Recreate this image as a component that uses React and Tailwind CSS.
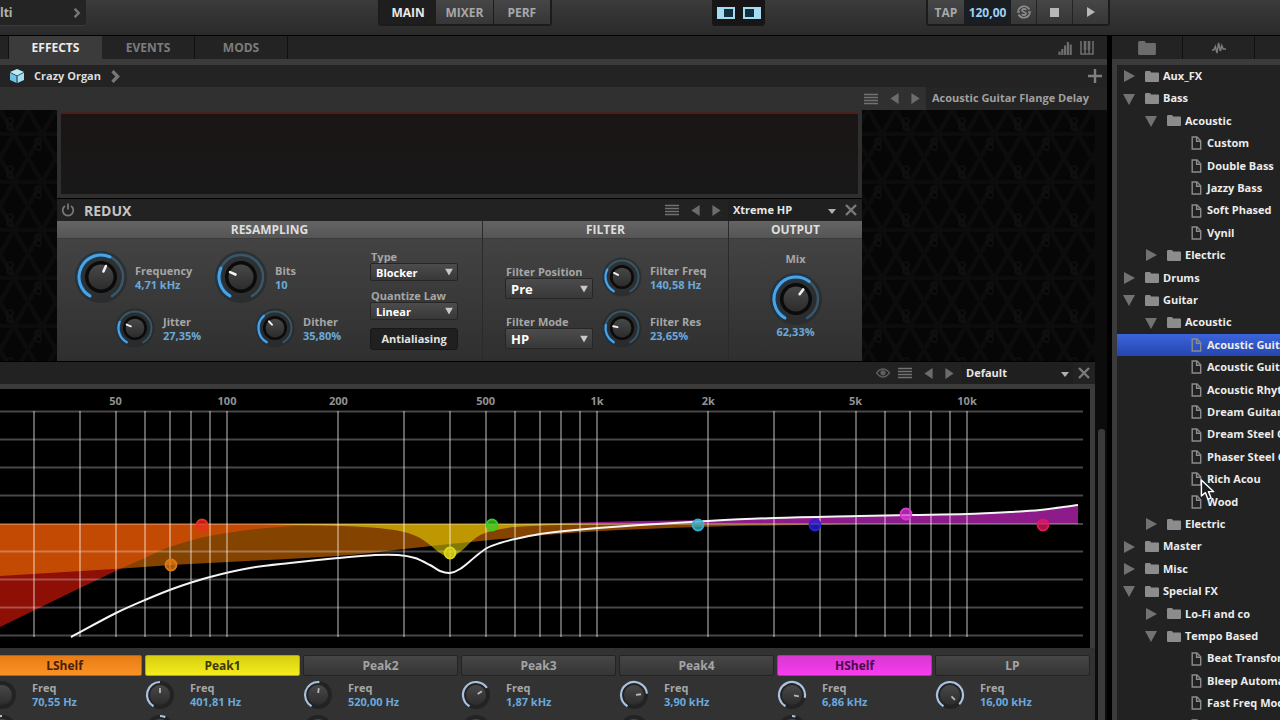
import clsx from "clsx";

const FREQS = [
  30, 40, 50, 60, 70, 80, 90, 100, 200, 300, 400, 500, 600, 700, 800, 900, 1000, 2000, 3000, 4000, 5000, 6000, 7000,
  8000, 9000, 10000,
];

const FREQ_LABELS = [
  [50, "50"],
  [100, "100"],
  [200, "200"],
  [500, "500"],
  [1000, "1k"],
  [2000, "2k"],
  [5000, "5k"],
  [10000, "10k"],
];

const GAIN_LINES = [22.5, 50.5, 78.5, 106.5, 135, 162.5, 190.5, 218.5, 246.5];

const HP_CURVE = [[0, 238], [33, 222], [80, 199], [120, 180], [147, 168], [167, 159], [200, 149], [227, 144], [267, 139], [320, 136], [404, 135]];
const LSHELF_CURVE = [[0, 187], [130, 179], [171, 176], [267, 171], [350, 166], [404, 160], [450, 155], [500, 150], [600, 142], [700, 138], [800, 136], [860, 135]];
const PEAK_CURVE = [[260, 135], [340, 137], [378, 139], [404, 143], [420, 149], [430, 156], [440, 164], [450, 168], [460, 163], [477, 148], [492, 142], [515, 138], [560, 136], [620, 135]];
const HSHELF_CURVE = [[520, 135], [600, 133], [640, 132], [708, 131], [774, 129], [860, 127], [910, 126], [967, 125], [1010, 123], [1040, 121], [1078, 116]];
const SUM_CURVE = [[71, 248], [116, 224], [145, 211], [175, 199], [210, 188], [250, 179], [290, 174], [338, 169], [375, 166], [398, 166], [415, 169], [430, 176], [440, 182], [450, 184], [460, 180], [475, 168], [487, 159], [500, 154], [515, 150], [540, 145], [565, 142], [598, 139], [640, 136], [708, 132], [774, 129], [860, 127], [910, 126], [967, 125], [1010, 123], [1040, 121], [1078, 116]];

const NODES = [
  { x: 202, y: 136, color: "#e8301c" },
  { x: 171, y: 176, color: "#e07a10" },
  { x: 450, y: 164, color: "#e0d818" },
  { x: 492, y: 136, color: "#3ccc28" },
  { x: 698, y: 136, color: "#38b0cc" },
  { x: 815, y: 136, color: "#2a22d8" },
  { x: 906, y: 125, color: "#d838d0" },
  { x: 1043, y: 136, color: "#e01860" },
];

const BANDS = [
  { name: "LShelf", freq: "70,55 Hz", value: 0.2, gain: 0.4, tone: "orange" },
  { name: "Peak1", freq: "401,81 Hz", value: 0.5, gain: 0.58, tone: "yellow" },
  { name: "Peak2", freq: "520,00 Hz", value: 0.52, gain: 0.5 },
  { name: "Peak3", freq: "1,87 kHz", value: 0.69, gain: 0.5 },
  { name: "Peak4", freq: "3,90 kHz", value: 0.78, gain: 0.5 },
  { name: "HShelf", freq: "6,86 kHz", value: 0.84, gain: 0.55, tone: "magenta" },
  { name: "LP", freq: "16,00 kHz", value: 0.95 },
];

const BAND_TONES = {
  orange: "border-[#b86410] bg-linear-to-b from-[#e87c14] to-[#fa9226] text-[#4a2000]",
  yellow: "border-[#b0a810] bg-linear-to-b from-[#d8d010] to-[#f4ec1c] text-[#3c3a00]",
  magenta: "border-[#b030a8] bg-linear-to-b from-[#d838d0] to-[#f83cf0] text-[#4c0a48]",
  none: "border-[#232323] bg-linear-to-b from-[#464646] to-[#353535] text-[#a4a4a4]",
};

const TREE = [
  { level: 0, type: "closed", name: "Aux_FX" },
  { level: 0, type: "open", name: "Bass" },
  { level: 1, type: "open", name: "Acoustic" },
  { level: 2, type: "file", name: "Custom" },
  { level: 2, type: "file", name: "Double Bass" },
  { level: 2, type: "file", name: "Jazzy Bass" },
  { level: 2, type: "file", name: "Soft Phased" },
  { level: 2, type: "file", name: "Vynil" },
  { level: 1, type: "closed", name: "Electric" },
  { level: 0, type: "closed", name: "Drums" },
  { level: 0, type: "open", name: "Guitar" },
  { level: 1, type: "open", name: "Acoustic" },
  { level: 2, type: "file", name: "Acoustic Guitar", selected: true },
  { level: 2, type: "file", name: "Acoustic Guitar" },
  { level: 2, type: "file", name: "Acoustic Rhythm" },
  { level: 2, type: "file", name: "Dream Guitar" },
  { level: 2, type: "file", name: "Dream Steel Guitar" },
  { level: 2, type: "file", name: "Phaser Steel Guitar" },
  { level: 2, type: "file", name: "Rich Acou" },
  { level: 2, type: "file", name: "Wood" },
  { level: 1, type: "closed", name: "Electric" },
  { level: 0, type: "closed", name: "Master" },
  { level: 0, type: "closed", name: "Misc" },
  { level: 0, type: "open", name: "Special FX" },
  { level: 1, type: "closed", name: "Lo-Fi and co" },
  { level: 1, type: "open", name: "Tempo Based" },
  { level: 2, type: "file", name: "Beat Transformer" },
  { level: 2, type: "file", name: "Bleep Automat" },
  { level: 2, type: "file", name: "Fast Freq Mod" },
  { level: 2, type: "file", name: "" },
];

const INDENT = ["pl-[6px]", "pl-[28px]", "pl-[74px]"];

const freqX = (f) => 227 + 370 * Math.log10(f / 100);

// Monotone-in-x cubic through the points
function spline(pts) {
  let d = `M${pts[0][0]} ${pts[0][1]}`;
  for (let i = 0; i < pts.length - 1; i++) {
    const p0 = pts[i - 1] || pts[i];
    const p1 = pts[i];
    const p2 = pts[i + 1];
    const p3 = pts[i + 2] || p2;
    const t = (p2[0] - p1[0]) / 3;
    const m1 = (p2[1] - p0[1]) / (p2[0] - p0[0] || 1);
    const m2 = (p3[1] - p1[1]) / (p3[0] - p1[0] || 1);
    d += `C${p1[0] + t} ${p1[1] + m1 * t} ${p2[0] - t} ${p2[1] - m2 * t} ${p2[0]} ${p2[1]}`;
  }
  return d;
}

function area(pts) {
  return `${spline(pts)}V135H${pts[0][0]}Z`;
}

function polar(c, r, deg) {
  const a = ((deg - 90) * Math.PI) / 180;
  return [c + r * Math.cos(a), c + r * Math.sin(a)];
}

function arc(c, r, from, to) {
  const [x1, y1] = polar(c, r, from);
  const [x2, y2] = polar(c, r, to);
  return `M${x1} ${y1}A${r} ${r} 0 ${to - from > 180 ? 1 : 0} 1 ${x2} ${y2}`;
}

function Knob({ value, large, label }) {
  const angle = -150 + value * 300;
  const [x1, y1] = polar(24, 6, angle);
  const [x2, y2] = polar(24, 12, angle);
  return (
    <svg
      viewBox="0 0 48 48"
      className={clsx("shrink-0 overflow-visible", large ? "size-12" : "size-9")}
      role="img"
      aria-label={label}
    >
      <circle cx="24" cy="24" r="26" fill="#232628" opacity="0.6" />
      <path d={arc(24, 22, -150, 150)} fill="none" stroke="#37586c" strokeWidth="2.5" strokeLinecap="round" />
      <path d={arc(24, 22, -150, angle)} fill="none" stroke="#123f66" strokeWidth="6" opacity="0.7" />
      <path d={arc(24, 22, -150, angle)} fill="none" stroke="#4ba3e3" strokeWidth="3" strokeLinecap="round" />
      <circle cx="24" cy="24" r="16" fill="#0b0b0b" />
      <circle cx="24" cy="24" r="12.5" fill="url(#cap)" />
      <path d={`M${x1} ${y1}L${x2} ${y2}`} stroke="#f2f2f2" strokeWidth="2.6" strokeLinecap="round" />
    </svg>
  );
}

function BandKnob({ value, bipolar, label }) {
  const angle = -150 + value * 300;
  const [x1, y1] = polar(15, 2, angle);
  const [x2, y2] = polar(15, 7, angle);
  const from = bipolar ? Math.min(0, angle) : -150;
  const to = bipolar ? Math.max(0, angle) : angle;
  return (
    <svg viewBox="0 0 30 30" className="size-[30px] shrink-0" role="img" aria-label={label}>
      <circle cx="15" cy="15" r="14" fill="#232323" />
      {to > from && <path d={arc(15, 13, from, to)} fill="none" stroke="#a8c2e0" strokeWidth="2.2" />}
      <circle cx="15" cy="15" r="10" fill="url(#cap)" />
      <path d={`M${x1} ${y1}L${x2} ${y2}`} stroke="#b8b8b8" strokeWidth="1.8" />
    </svg>
  );
}

function Param({ label, value, amount, large }) {
  return (
    <div className="flex items-center gap-[10px]">
      <Knob value={amount} large={large} label={label} />
      <div className="pt-px text-[11px] leading-[14px] font-bold whitespace-nowrap">
        <div className="text-[#a6a6a6]">{label}</div>
        <div className="text-[#6aa9dc]">{value}</div>
      </div>
    </div>
  );
}

function Choice({ id, label, value, big }) {
  return (
    <div>
      <label htmlFor={id} className="block pl-px text-[11px] leading-[13px] font-bold whitespace-nowrap text-[#a6a6a6]">
        {label}
      </label>
      <div className="relative">
        <select
          id={id}
          defaultValue={value}
          className={clsx(
            "block w-[88px] appearance-none rounded-[2px] border border-[#262626] bg-linear-to-b from-[#4c4c4c] to-[#383838] pl-[5px] font-bold text-white",
            big ? "h-[21px] text-[13px] leading-[18px]" : "h-[18px] text-[11px] leading-[15px]"
          )}
        >
          <option>{value}</option>
        </select>
        <Triangle className="pointer-events-none absolute top-1/2 right-[5px] h-[7px] w-2 -translate-y-1/2 text-[#c8c8c8]" />
      </div>
    </div>
  );
}

function PresetSelect({ label, value }) {
  return (
    <div className="relative">
      <select
        aria-label={label}
        defaultValue={value}
        className="block h-[21px] w-[112px] appearance-none bg-[#1f1f1f] pl-[5px] text-[11px] font-bold text-[#e6e6e6]"
      >
        <option>{value}</option>
      </select>
      <Triangle className="pointer-events-none absolute top-[9px] right-1 h-[5px] w-2 text-[#b0b0b0]" />
    </div>
  );
}

function Triangle({ className }) {
  return (
    <svg viewBox="0 0 10 10" preserveAspectRatio="none" className={className}>
      <path d="M0 0H10L5 10Z" fill="currentColor" />
    </svg>
  );
}

function Arrow({ left }) {
  return (
    <svg viewBox="0 0 9 12" className="h-[11px] w-[9px]">
      <path d={left ? "M9 0V12L0 6Z" : "M0 0V12L9 6Z"} fill="#6c6c6c" />
    </svg>
  );
}

function Chevron({ className }) {
  return (
    <svg viewBox="0 0 8 12" className={className}>
      <path d="M1.2 1L6 6L1.2 11" fill="none" stroke="#777" strokeWidth="3" />
    </svg>
  );
}

function FolderIcon({ className }) {
  return (
    <svg viewBox="0 0 14 11" className={className}>
      <path d="M0 1.2Q0 0 1.2 0H4.8Q5.6 0 6 1.5H13Q14 1.5 14 2.5V10Q14 11 13 11H1Q0 11 0 10Z" fill="currentColor" />
    </svg>
  );
}

function FileIcon() {
  return (
    <svg viewBox="0 0 12 14" className="h-[14px] w-3 shrink-0">
      <path d="M1.2 1H6L9.7 4.8V13H1.2Z" fill="none" stroke="#8c8c8c" strokeWidth="1.4" />
      <path d="M5.6 1V5.2H9.7" fill="none" stroke="#8c8c8c" strokeWidth="1.4" />
    </svg>
  );
}

function PresetNav({ eye }) {
  return (
    <>
      {eye && (
        <button aria-label="Show" className="mr-2">
          <svg viewBox="0 0 14 10" className="h-[10px] w-[14px]">
            <path d="M0.5 5Q7 -3 13.5 5Q7 13 0.5 5Z" fill="none" stroke="#5e5e5e" strokeWidth="1.5" />
            <circle cx="7" cy="4.8" r="2.6" fill="#5e5e5e" />
          </svg>
        </button>
      )}
      <button aria-label="Preset list">
        <svg viewBox="0 0 14 12" className="h-3 w-[14px]">
          <path d="M0 1.5H14M0 4.5H14M0 7.5H14M0 10.5H14" stroke="#727272" strokeWidth="1.6" />
        </svg>
      </button>
      <button aria-label="Previous preset" className="ml-3">
        <Arrow left />
      </button>
      <button aria-label="Next preset" className="ml-3">
        <Arrow />
      </button>
    </>
  );
}

function CloseButton() {
  return (
    <button aria-label="Close" className="flex w-[22px] justify-center">
      <svg viewBox="0 0 12 12" className="size-3">
        <path d="M1 1L11 11M11 1L1 11" stroke="#7a7a7a" strokeWidth="2.4" />
      </svg>
    </button>
  );
}

function Header() {
  return (
    <header className="flex h-9 shrink-0 items-start border-b border-black bg-linear-to-b from-[#3b3b3b] to-[#2a2a2a]">
      <button className="flex h-[26px] w-[86px] items-center justify-between rounded-br-[3px] border-b border-[#3c3c3c] bg-[#242424] pr-[5px] text-xs font-bold text-[#b4b4b4]">
        lti
        <Chevron className="h-[10px] w-2" />
      </button>
      <div className="flex-[292_1_0px]" />
      <nav className="flex h-[26px] w-[174px] rounded-b-[3px] border-2 border-t-0 border-[#1c1c1c] text-xs font-bold text-[#a8a8a8]">
        <button className="flex-1 bg-[#1e1e1e] pt-px text-[#e8e8e8]">MAIN</button>
        <button className="flex-1 bg-linear-to-b from-[#464646] to-[#363636] pt-px">MIXER</button>
        <button className="flex-1 border-l border-[#1c1c1c] bg-linear-to-b from-[#464646] to-[#363636] pt-px">
          PERF
        </button>
      </nav>
      <div className="flex-[160_1_0px]" />
      <div className="flex h-[26px] w-[53px] items-center justify-center gap-[8px] rounded-b-[3px] bg-[#161616]">
        <button aria-label="Toggle left panel">
          <svg viewBox="0 0 18 12" className="h-3 w-[18px]">
            <path d="M0 0H18V12H0Z" fill="#a5dcf2" />
            <path d="M7 2H16V10H7Z" fill="#12303c" />
          </svg>
        </button>
        <button aria-label="Toggle right panel">
          <svg viewBox="0 0 18 12" className="h-3 w-[18px]">
            <path d="M0 0H18V12H0Z" fill="#a5dcf2" />
            <path d="M2 2H11V10H2Z" fill="#12303c" />
          </svg>
        </button>
      </div>
      <div className="flex-[161_1_0px]" />
      <div className="flex h-[26px] w-[184px] rounded-b-[3px] border-2 border-t-0 border-[#1c1c1c] bg-linear-to-b from-[#464646] to-[#363636] text-xs font-bold">
        <button className="w-[36px] pt-px text-[#a8a8a8]">TAP</button>
        <input
          aria-label="Tempo"
          defaultValue="120,00"
          className="w-[47px] min-w-0 bg-[#1a1e22] pt-px text-center text-[#9fd0f4]"
        />
        <button aria-label="Sync" className="flex w-[25px] items-center justify-center">
          <svg viewBox="0 0 14 14" className="size-[14px]" fill="none" stroke="#8c8c8c" strokeWidth="1.7">
            <path d="M1.2 6A6 6 0 0 1 12.4 4.5M12.8 8A6 6 0 0 1 1.6 9.5" />
            <path d="M9.4 4.8Q7 3.2 5.2 4.6Q4.4 6.4 7 7Q9.6 7.6 8.8 9.4Q7 10.8 4.6 9.2" />
            <path d="M0 7H3M11 7H14" />
          </svg>
        </button>
        <button aria-label="Stop" className="flex flex-1 items-center justify-center border-l border-[#232323]">
          <span className="size-[9px] bg-[#b8b8b8]" />
        </button>
        <button aria-label="Play" className="flex flex-1 items-center justify-center border-l border-[#232323]">
          <svg viewBox="0 0 8 10" className="h-[10px] w-2">
            <path d="M0 0L8 5L0 10Z" fill="#b8b8b8" />
          </svg>
        </button>
      </div>
      <div className="flex-[170_1_0px]" />
    </header>
  );
}

function Tabs() {
  return (
    <div className="flex h-[29px] shrink-0 border-b-[6px] border-[#3b3b3b] bg-[#232323] text-xs font-bold text-[#7c7c7c]">
      <div className="w-[9px] border-r border-[#111]" />
      <button className="w-[93px] bg-[#3b3b3b] pt-px text-[#ececec]">EFFECTS</button>
      <button className="w-[93px] border-r border-[#111] pt-px">EVENTS</button>
      <button className="w-[93px] border-r border-[#111] pt-px">MODS</button>
      <div className="ml-auto flex items-center gap-2 pr-[13px]">
        <button aria-label="Levels">
          <svg viewBox="0 0 14 14" className="size-[14px]">
            <path d="M1.5 14V10.5M4.3 14V8M7.1 14V4.5M9.9 14V1M12.7 14V3.5" stroke="#6c6c6c" strokeWidth="2.2" />
          </svg>
        </button>
        <button aria-label="Keyboard">
          <svg viewBox="0 0 14 14" className="size-[14px]">
            <path d="M1 0V13H13V0M5 8V13M9 8V13" fill="none" stroke="#6c6c6c" strokeWidth="1.6" />
            <path d="M5 0V9M9 0V9" stroke="#6c6c6c" strokeWidth="2.6" />
          </svg>
        </button>
      </div>
    </div>
  );
}

function Breadcrumb() {
  return (
    <div className="flex h-[22px] shrink-0 items-center bg-[#232323] pr-[5px] pl-[9px]">
      <svg viewBox="0 0 16 16" className="size-4">
        <path d="M8 1L15 4L8 7.4L1 4Z" fill="#b8ecfa" />
        <path d="M1 4.8L7.5 8V15L1 12Z" fill="#6cc4e4" />
        <path d="M15 4.8L8.5 8V15L15 12Z" fill="#a0def2" />
      </svg>
      <a href="#crazy-organ" className="ml-[9px] text-[11px] font-bold text-[#dcdcdc]">
        Crazy Organ
      </a>
      <Chevron className="ml-[10px] h-[13px] w-[9px]" />
      <button aria-label="Add effect" className="ml-auto">
        <svg viewBox="0 0 14 14" className="size-[14px]">
          <path d="M7 0V14M0 7H14" stroke="#808080" strokeWidth="2.4" />
        </svg>
      </button>
    </div>
  );
}

function SectionTitle({ children }) {
  return (
    <h3 className="h-[18px] border-b border-[#3a3a3a] bg-linear-to-b from-[#646464] to-[#555] text-center text-xs leading-[18px] font-bold text-[#dedede]">
      {children}
    </h3>
  );
}

function Redux() {
  return (
    <section>
      <div className="flex h-[22px] items-center bg-[#222] pl-1">
        <button aria-label="Bypass">
          <svg viewBox="0 0 14 14" className="size-[14px]">
            <path d="M4 3A5.3 5.3 0 1 0 10 3M7 0.5V6.5" fill="none" stroke="#7a7a7a" strokeWidth="1.7" />
          </svg>
        </button>
        <h2 className="ml-[9px] flex-1 pt-px text-sm font-bold text-[#c4c4c4]">REDUX</h2>
        <PresetNav />
        <div className="ml-[7px]">
          <PresetSelect label="Redux preset" value="Xtreme HP" />
        </div>
        <CloseButton />
      </div>
      <div className="grid grid-cols-[425fr_246fr_134fr] bg-linear-to-b from-[#464646] to-[#2f2f2f]">
        <div>
          <SectionTitle>RESAMPLING</SectionTitle>
          <div className="flex h-[122px]">
            <div className="w-[313px] pt-[14px]">
              <div className="grid grid-cols-[140px_140px] pl-5">
                <Param label="Frequency" value="4,71 kHz" amount={0.58} large />
                <Param label="Bits" value="10" amount={0.28} large />
              </div>
              <div className="mt-[9px] grid grid-cols-[140px_110px] pl-[60px]">
                <Param label="Jitter" value="27,35%" amount={0.2735} />
                <Param label="Dither" value="35,80%" amount={0.358} />
              </div>
            </div>
            <div className="flex flex-col gap-2 pt-[11px]">
              <Choice id="type" label="Type" value="Blocker" />
              <Choice id="quantize" label="Quantize Law" value="Linear" />
              <button className="h-[22px] w-[88px] rounded-[3px] border border-[#181818] bg-[#202020] text-[11px] font-bold whitespace-nowrap text-[#e2e2e2]">
                Antialiasing
              </button>
            </div>
          </div>
        </div>
        <div className="border-l border-[#2a2a2a]">
          <SectionTitle>FILTER</SectionTitle>
          <div className="flex h-[122px] pl-[22px]">
            <div className="flex flex-col gap-4 pt-[26px]">
              <Choice id="filter-position" label="Filter Position" value="Pre" big />
              <Choice id="filter-mode" label="Filter Mode" value="HP" big />
            </div>
            <div className="ml-[11px] flex flex-col gap-[15px] pt-5">
              <Param label="Filter Freq" value="140,58 Hz" amount={0.29} />
              <Param label="Filter Res" value="23,65%" amount={0.2365} />
            </div>
          </div>
        </div>
        <div className="border-l border-[#2a2a2a]">
          <SectionTitle>OUTPUT</SectionTitle>
          <div className="flex flex-col items-center pt-[13px] text-[11px] leading-[14px] font-bold">
            <div className="mb-[9px] text-[#a6a6a6]">Mix</div>
            <Knob value={0.6233} large label="Mix" />
            <div className="mt-[2px] text-[#6aa9dc]">62,33%</div>
          </div>
        </div>
      </div>
    </section>
  );
}

function Rack() {
  return (
    <div className="relative flex border-b border-black bg-[#060606]">
      <svg className="absolute inset-0 h-full w-full" aria-hidden="true">
        <defs>
          <pattern id="weave" width="56" height="48" patternUnits="userSpaceOnUse">
            <path d="M0 0L28 48L56 0M0 48L28 0L56 48M0 24H56" fill="none" stroke="#0c0c0c" strokeWidth="4" />
            <path
              d="M10 8a3 3 0 1 0 .1 0M10 14a3 3 0 1 0 .1 0M38 28a3 3 0 1 0 .1 0M38 34a3 3 0 1 0 .1 0"
              fill="none"
              stroke="#101010"
              strokeWidth="1.5"
            />
          </pattern>
        </defs>
        <rect width="100%" height="100%" fill="url(#weave)" />
      </svg>
      <div className="relative mr-[233px] ml-[57px] flex-1">
        <div className="border-b border-black bg-[#2f2f2f] px-1 pt-[2px] pb-1">
          <div className="h-[82px] border-t-2 border-[#4e201b] bg-linear-to-b from-[#1b1515] to-[#181818]" />
        </div>
        <Redux />
      </div>
    </div>
  );
}

function EqGraph() {
  return (
    <svg viewBox="0 0 1090 259" className="block h-auto w-full bg-black" role="img" aria-label="Equalizer curve">
      <g fill="#929292" fontSize="11" fontWeight="700" textAnchor="middle">
        {FREQ_LABELS.map(([f, text]) => (
          <text key={text} x={freqX(f)} y="16">
            {text}
          </text>
        ))}
      </g>
      <path d={area(HP_CURVE)} fill="#eb1908" fillOpacity="0.6" />
      <path d={area(LSHELF_CURVE)} fill="#f07c00" fillOpacity="0.55" />
      <path d={area(PEAK_CURVE)} fill="#f0dc00" fillOpacity="0.55" />
      <path d={area(HSHELF_CURVE)} fill="#e32bdd" fillOpacity="0.62" />
      <g stroke="#fff" strokeOpacity="0.38" strokeWidth="2">
        {FREQS.map((f) => (
          <path key={f} d={`M${Math.round(freqX(f))} 22V248`} />
        ))}
        {GAIN_LINES.map((y) => (
          <path key={y} d={`M0 ${y}H1083`} strokeOpacity="0.28" />
        ))}
      </g>
      <path d={spline(SUM_CURVE)} fill="none" stroke="#f4f4f4" strokeWidth="2" />
      {NODES.map((n) => (
        <circle key={n.x} cx={n.x} cy={n.y} r="5.5" fill={n.color} fillOpacity="0.75" stroke={n.color} strokeWidth="1.8" />
      ))}
    </svg>
  );
}

function Band({ band }) {
  return (
    <div>
      <button
        className={clsx("block h-[21px] w-full rounded-[2px] border text-xs font-bold", BAND_TONES[band.tone || "none"])}
      >
        {band.name}
      </button>
      <div className="mt-1 flex items-center gap-[15px]">
        <BandKnob value={band.value} label={`${band.name} frequency`} />
        <div className="text-[11px] leading-[14px] font-bold">
          <div className="text-[#a6a6a6]">Freq</div>
          <div className="text-[#6aa9dc]">{band.freq}</div>
        </div>
      </div>
      {band.gain && (
        <div className="mt-1 flex items-center gap-[15px]">
          <BandKnob value={band.gain} bipolar label={`${band.name} gain`} />
          <div className="pt-[2px] text-[11px] leading-[14px] font-bold">
            <div className="text-[#a6a6a6]">Gain</div>
          </div>
        </div>
      )}
    </div>
  );
}

function Equalizer() {
  return (
    <section>
      <div className="flex h-[22px] items-center justify-end bg-[#222]">
        <PresetNav eye />
        <div className="ml-[7px]">
          <PresetSelect label="Equalizer preset" value="Default" />
        </div>
        <CloseButton />
      </div>
      <div className="border-t-[5px] border-r-[5px] border-[#3b3b3b]">
        <EqGraph />
      </div>
      <div className="h-[72px] bg-[#323232] pt-[7px] pr-[5px]">
        <div className="-ml-[13px] grid grid-cols-7 gap-x-[3px]">
          {BANDS.map((band) => (
            <Band key={band.name} band={band} />
          ))}
        </div>
      </div>
    </section>
  );
}

function TreeRow({ item }) {
  return (
    <li className="min-h-0">
      <button
        className={clsx(
          "flex h-full w-full items-center text-[11px] font-bold whitespace-nowrap text-[#ececec]",
          INDENT[item.level],
          item.selected && "bg-linear-to-b from-[#3c64dc] to-[#2446ae]"
        )}
      >
        {item.type === "file" ? (
          <FileIcon />
        ) : (
          <>
            <span className="mr-[10px] flex w-3 shrink-0 justify-center">
              <svg viewBox="0 0 12 12" className="size-3">
                <path d={item.type === "open" ? "M0 1H12L6 12Z" : "M1 0L12 6L1 12Z"} fill="#727272" />
              </svg>
            </span>
            <FolderIcon className="h-[11px] w-[14px] shrink-0 text-[#8c8c8c]" />
          </>
        )}
        <span className="ml-1">{item.name}</span>
      </button>
    </li>
  );
}

function Browser() {
  return (
    <aside className="flex w-[168px] shrink-0 flex-col overflow-hidden bg-[#222]">
      <div className="flex h-[29px] shrink-0 border-b-[6px] border-[#3b3b3b] bg-[#232323]">
        <button aria-label="Files" className="flex w-[71px] items-center justify-center border-r border-[#111]">
          <FolderIcon className="h-[14px] w-[18px] text-[#6c6c6c]" />
        </button>
        <button aria-label="Modulation" className="flex w-[72px] items-center justify-center border-r border-[#111]">
          <svg viewBox="0 0 14 12" className="h-3 w-[14px]">
            <path
              d="M0 8H1.8L3.4 4.5L5 11L6.6 0.8L8.4 9L9.8 3.6L11.2 7H14"
              fill="none"
              stroke="#7c7c7c"
              strokeWidth="1.5"
            />
          </svg>
        </button>
      </div>
      <div className="relative min-h-0 flex-1 overflow-hidden border-l-[5px] border-[#3b3b3b]">
        <ul className="grid h-[672px] auto-rows-fr">
          {TREE.map((item, i) => (
            <TreeRow key={i} item={item} />
          ))}
        </ul>
        <svg viewBox="0 0 14 20" className="absolute top-[414px] left-[83px] h-[22px] w-4">
          <path
            d="M1 1V15.5L4.6 12.4L7 18.4L9.8 17.2L7.4 11.5H12.2Z"
            fill="#1c1c1c"
            stroke="#fff"
            strokeWidth="1.3"
            strokeLinejoin="round"
          />
        </svg>
      </div>
    </aside>
  );
}

export default function App() {
  return (
    <div className="flex h-screen flex-col overflow-hidden bg-black font-['Open_Sans','Noto_Sans',sans-serif] select-none">
      <svg className="absolute size-0" aria-hidden="true">
        <linearGradient id="cap" x1="0" y1="0" x2="0" y2="1">
          <stop offset="0" stopColor="#484848" />
          <stop offset="1" stopColor="#2c2c2c" />
        </linearGradient>
      </svg>
      <Header />
      <div className="flex min-h-0 flex-1 gap-[5px]">
        <main className="flex min-w-0 flex-1 flex-col">
          <Tabs />
          <Breadcrumb />
          <div className="flex h-[23px] shrink-0 items-center justify-end bg-[#303030]">
            <PresetNav />
            <button className="ml-[6px] h-full w-[181px] bg-[#252525] pl-[6px] text-left text-[11px] font-bold whitespace-nowrap text-[#a0a0a0]">
              Acoustic Guitar Flange Delay
            </button>
          </div>
          <div className="flex min-h-0 flex-1">
            <div className="min-w-0 flex-1 overflow-hidden">
              <Rack />
              <Equalizer />
            </div>
            <div className="flex w-3 justify-center bg-[#0c0c0c] pt-[319px]">
              <div className="w-[7px] rounded-t-[3px] bg-[#3a3a3a]" />
            </div>
          </div>
        </main>
        <Browser />
      </div>
    </div>
  );
}
